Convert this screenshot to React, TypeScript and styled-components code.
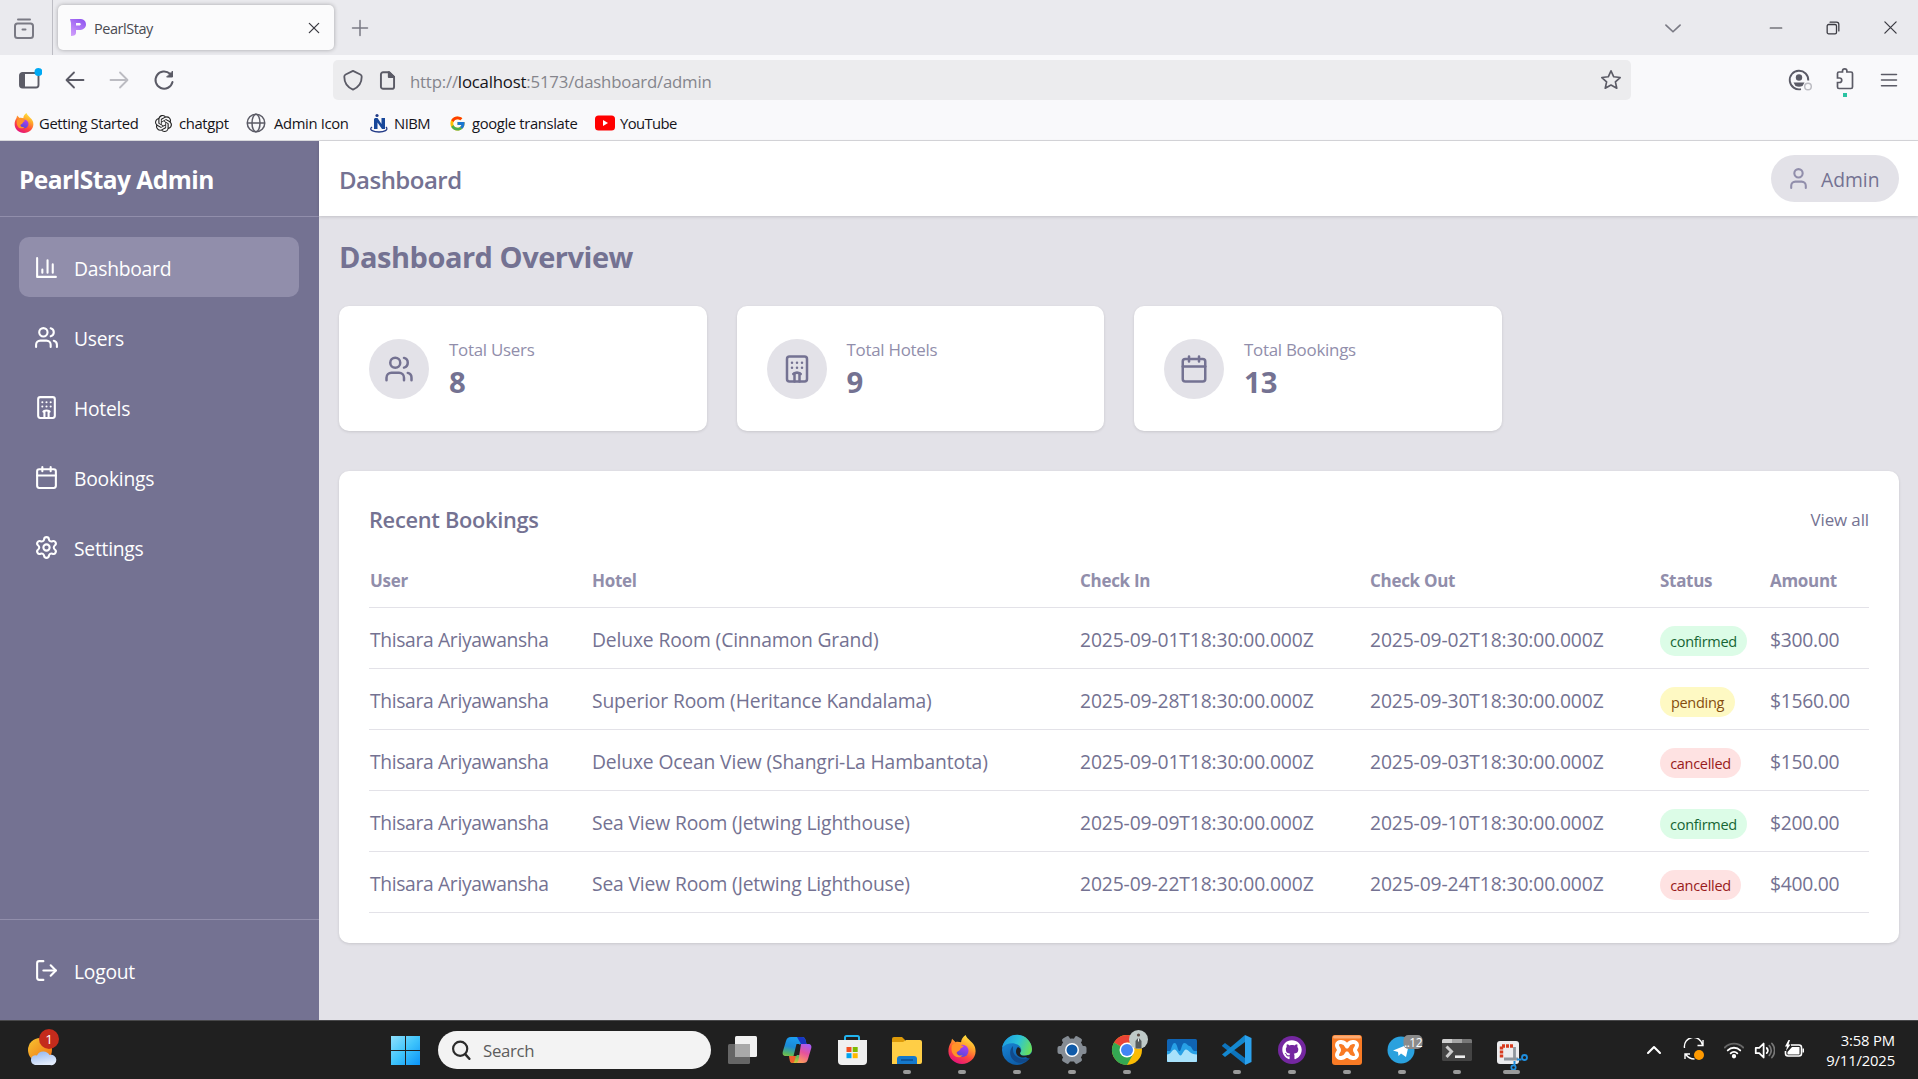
import React from "react";
import styled, { createGlobalStyle, css } from "styled-components";
import { Users, Hotel, Calendar, Settings, LogOut, User } from "lucide-react";
import { FcGoogle } from "react-icons/fc";
import { FaGithub } from "react-icons/fa";
import { SiOpenai } from "react-icons/si";

const c = {
  purple: "#747292",
  mid: "#918eab",
  pale: "#e3e2e8",
  chrome: "#eaeaee",
  toolbar: "#f9f9fb",
  ink: "#5b5b66",
};

const GlobalStyle = createGlobalStyle`
  * { box-sizing: border-box; }
  body { margin: 0; font-family: "Open Sans", "Noto Sans", sans-serif; overflow: hidden; }
  svg { display: block; flex: none; }
  h1, h2, p { margin: 0; }
`;

const Screen = styled.div`
  display: flex;
  flex-direction: column;
  width: 1918px;
  height: 1079px;
  background: ${c.pale};
`;

/* ---------- browser ---------- */
const TabBar = styled.div`
  display: flex;
  align-items: center;
  height: 55px;
  background: ${c.chrome};
  color: ${c.ink};
`;
const ArchiveCell = styled.div`
  width: 53px;
  height: 55px;
  padding: 17px 0 0 12px;
  border-right: 1px solid #bdbdc4;
`;
const Tab = styled.div`
  display: flex;
  align-items: center;
  width: 276px;
  height: 45px;
  margin: 0 16px 0 5px;
  padding: 0 13px 0 12px;
  border-radius: 5px;
  background: #fbfbfc;
  box-shadow: 0 0 4px rgba(0, 0, 0, 0.3);
`;
const TabTitle = styled.span`
  flex: 1;
  margin-left: 7px;
  padding-top: 2px;
  font-size: 14.5px;
  letter-spacing: -0.45px;
  color: #4a4a52;
`;
const WindowControls = styled.div`
  display: flex;
  align-items: center;
  margin-left: auto;
  padding-right: 20px;
  gap: 43px;
`;
const TabsMenu = styled.div`
  margin-right: 43px;
`;
const Toolbar = styled.div`
  display: flex;
  align-items: center;
  height: 50px;
  background: ${c.toolbar};
  color: ${c.ink};
`;
const NavButtons = styled.div`
  display: flex;
  align-items: center;
  width: 333px;
  padding-left: 18px;
  gap: 20.5px;
`;
const UrlBar = styled.div`
  display: flex;
  align-items: center;
  width: 1298px;
  height: 40px;
  padding: 0 9px 0 9px;
  border-radius: 5px;
  background: #ececee;
`;
const PageInfo = styled.div`
  margin-left: 13px;
`;
const Url = styled.span`
  flex: 1;
  margin-left: 12px;
  padding-top: 2px;
  font-size: 16.8px;
  letter-spacing: -0.2px;
  color: #85858c;
  b { font-weight: 400; color: #15141a; }
`;
const ToolbarEnd = styled.div`
  display: flex;
  align-items: center;
  margin-left: auto;
  padding-right: 20px;
  gap: 21px;
  svg:last-child { margin-left: 3px; }
`;
const Bookmarks = styled.div`
  display: flex;
  height: 36px;
  padding-left: 14px;
  align-items: center;
  background: ${c.toolbar};
  border-bottom: 1px solid #d8d8dc;
`;
const Bookmark = styled.div<{ $w: number; $gap?: number; $track?: number }>`
  display: flex;
  align-items: center;
  width: ${(p) => p.$w}px;
  gap: ${(p) => p.$gap ?? 5}px;
  padding-top: 1px;
  font-size: 14.8px;
  letter-spacing: ${(p) => p.$track ?? -0.35}px;
  white-space: nowrap;
  color: #15141a;
`;

/* ---------- admin page ---------- */
const Page = styled.div`
  display: flex;
  height: 879px;
`;
const Sidebar = styled.aside`
  display: flex;
  flex-direction: column;
  width: 319px;
  background: ${c.purple};
  color: #fff;
`;
const Brand = styled.div`
  height: 76px;
  padding: 20.5px 19px 0;
  border-bottom: 1px solid ${c.mid};
  font-size: 24.5px;
  line-height: 36px;
  font-weight: 700;
  letter-spacing: -0.52px;
`;
const Nav = styled.nav`
  display: flex;
  flex-direction: column;
  flex: 1;
  gap: 10px;
  padding: 20px 20px 0 19px;
`;
const NavItem = styled.a<{ $active?: boolean }>`
  display: flex;
  align-items: center;
  height: 60px;
  padding-left: 15px;
  gap: 15px;
  border-radius: 10px;
  font-size: 19.3px;
  letter-spacing: -0.25px;
  background: ${(p) => (p.$active ? c.mid : "transparent")};
  span { padding-top: 3px; }
`;
const SideFooter = styled.div`
  height: 101px;
  padding: 20px 20px 0 19px;
  border-top: 1px solid ${c.mid};
`;
const Main = styled.main`
  display: flex;
  flex-direction: column;
  flex: 1;
`;
const PageHeader = styled.header`
  display: flex;
  align-items: center;
  justify-content: space-between;
  height: 75px;
  padding: 0 19px 0 20px;
  background: #fff;
  box-shadow: 0 1px 3px rgba(0, 0, 0, 0.15);
`;
const PageTitle = styled.h2`
  padding-top: 1px;
  font-size: 24px;
  font-weight: 600;
  letter-spacing: -0.52px;
  color: ${c.purple};
`;
const Profile = styled.div`
  display: flex;
  align-items: center;
  width: 128px;
  height: 47px;
  padding-left: 15px;
  gap: 10px;
  border-radius: 24px;
  background: ${c.pale};
  font-size: 19.3px;
  color: ${c.purple};
  svg { color: ${c.mid}; }
  span { padding-top: 2px; }
`;
const Content = styled.div`
  padding: 21px 19px 0 20px;
`;
const Heading = styled.h1`
  margin-bottom: 29px;
  font-size: 29px;
  line-height: 40px;
  font-weight: 700;
  letter-spacing: -0.48px;
  color: ${c.purple};
`;
const Stats = styled.div`
  display: grid;
  grid-template-columns: repeat(4, 1fr);
  gap: 30px;
  margin-bottom: 40px;
`;
const card = css`
  border-radius: 10px;
  background: #fff;
  box-shadow: 0 1px 3px rgba(0, 0, 0, 0.12);
`;
const StatCard = styled.div`
  ${card}
  display: flex;
  align-items: center;
  height: 125px;
  padding-left: 30px;
  gap: 20px;
`;
const StatIcon = styled.div`
  display: grid;
  place-items: center;
  width: 60px;
  height: 60px;
  border-radius: 50%;
  background: ${c.pale};
  color: ${c.purple};
`;
const StatLabel = styled.p`
  padding-top: 1px;
  font-size: 16.9px;
  line-height: 25px;
  letter-spacing: -0.26px;
  color: ${c.mid};
`;
const StatValue = styled.p`
  font-size: 29.3px;
  line-height: 40px;
  font-weight: 700;
  color: ${c.purple};
`;
const Panel = styled.section`
  ${card}
  height: 472px;
  padding: 30px;
`;
const PanelHead = styled.div`
  display: flex;
  align-items: center;
  justify-content: space-between;
  height: 51px;
  padding-bottom: 14px;
  color: ${c.purple};
`;
const PanelTitle = styled.h2`
  font-size: 21.8px;
  font-weight: 600;
  letter-spacing: -0.3px;
`;
const ViewAll = styled.a`
  font-size: 16.9px;
  letter-spacing: -0.1px;
`;
const Row = styled.div<{ $head?: boolean }>`
  display: grid;
  grid-template-columns: 222px 488px 290px 290px 110px 1fr;
  align-items: center;
  height: ${(p) => (p.$head ? 56 : 61)}px;
  padding: ${(p) => (p.$head ? 1 : 3)}px 0 0 1px;
  border-bottom: 1px solid ${c.pale};
  white-space: nowrap;
  font-size: ${(p) => (p.$head ? 17 : 19.3)}px;
  font-weight: ${(p) => (p.$head ? 700 : 400)};
  letter-spacing: ${(p) => (p.$head ? -0.3 : -0.35)}px;
  color: ${(p) => (p.$head ? c.mid : c.purple)};
`;
const HotelCell = styled.span`
  letter-spacing: -0.15px;
`;
const DateCell = styled.span`
  letter-spacing: -0.13px;
`;
const AmountCell = styled.span`
  letter-spacing: -0.3px;
`;
type Status = "confirmed" | "pending" | "cancelled";
const tone: Record<Status, [string, string, number]> = {
  confirmed: ["#dcfce7", "#166534", 87],
  pending: ["#fef9c3", "#854d0e", 75],
  cancelled: ["#fee2e2", "#991b1b", 81],
};
const Badge = styled.span<{ $status: Status }>`
  display: block;
  width: ${(p) => tone[p.$status][2]}px;
  height: 30px;
  margin-top: 3px;
  padding-top: 1px;
  border-radius: 15px;
  font-size: 14.5px;
  line-height: 29px;
  letter-spacing: -0.3px;
  text-align: center;
  background: ${(p) => tone[p.$status][0]};
  color: ${(p) => tone[p.$status][1]};
`;

/* ---------- taskbar ---------- */
const Taskbar = styled.footer`
  display: flex;
  height: 59px;
  border-top: 1px solid #48484a;
  background: #202020;
  color: #fff;
`;
const Weather = styled.div`
  width: 391px;
  padding: 7px 0 0 26px;
`;
const Start = styled.div`
  width: 47px;
  padding-top: 15px;
`;
const SearchBox = styled.div`
  display: flex;
  align-items: center;
  width: 273px;
  height: 38px;
  margin-top: 10px;
  padding-left: 13px;
  gap: 12px;
  border-radius: 19px;
  background: #f3f3f3;
  font-size: 16.8px;
  letter-spacing: -0.3px;
  color: #5c5c5c;
`;
const Apps = styled.div`
  display: flex;
  padding-left: 3px;
`;
const AppSlot = styled.div<{ $run?: boolean; $wide?: boolean }>`
  display: flex;
  flex-direction: column;
  align-items: center;
  width: 55px;
  padding-top: 9px;
  &::after {
    content: "";
    width: ${(p) => (p.$wide ? 17 : 8)}px;
    height: 4px;
    border-radius: 2px;
    background: ${(p) => (p.$run ? "#9a9a9a" : "transparent")};
  }
`;
const Tray = styled.div`
  display: flex;
  align-items: center;
  margin-left: auto;
  padding-right: 23px;
`;
const TrayIcon = styled.div<{ $w: number }>`
  display: flex;
  justify-content: center;
  width: ${(p) => p.$w}px;
`;
const Clock = styled.div`
  width: 81px;
  text-align: right;
  font-size: 14.8px;
  line-height: 20px;
  letter-spacing: -0.15px;
  white-space: nowrap;
`;

/* ---------- icons ---------- */
type LineProps = { w?: number; sw?: number; children: React.ReactNode; color?: string };
const Line = ({ w = 24, sw = 1.8, children, color = "currentColor" }: LineProps) => (
  <svg width={w} height={w} viewBox="0 0 24 24" fill="none" stroke={color} strokeWidth={sw} strokeLinecap="round" strokeLinejoin="round">
    {children}
  </svg>
);

const BarChart = () => (
  <Line w={25} sw={2}>
    <path d="M3 3v18h18M18 17V9M13 17V5M8 17v-3" />
  </Line>
);

const Firefox = ({ w = 20, id }: { w?: number; id: string }) => (
  <svg width={w} height={w} viewBox="0 0 32 32">
    <defs>
      <linearGradient id={id + "a"} x1="0.8" y1="0" x2="0.3" y2="1">
        <stop offset="0" stopColor="#fff044" />
        <stop offset="0.35" stopColor="#ffa62b" />
        <stop offset="0.65" stopColor="#ff4a3c" />
        <stop offset="1" stopColor="#e3107f" />
      </linearGradient>
      <linearGradient id={id + "b"} x1="0.7" y1="0" x2="0.3" y2="1">
        <stop offset="0" stopColor="#b43cf0" />
        <stop offset="1" stopColor="#5148d8" />
      </linearGradient>
    </defs>
    <path fill={`url(#${id}a)`} d="M20 0c1 3 3 4 5.500 7C30 11 31 14 31 18c0 8-7 14-15 14S1 26 1 18c0-4 1-7 3-10l1-4 4 4c2-1 4 0 6 0 0-3 2-6 5-8Z" />
    <circle cx="16.500" cy="17.500" r="6.700" fill={`url(#${id}b)`} />
    <path fill="#ff9328" d="M5 11c3-2 6-2 8-1 1 1 3 2 5 2-1 2-4 2-4 4-1 2-4 2-4 4 1 3 5 3 7 2-3 4-9 3-11-1-2-3-2-7-1-10Z" />
  </svg>
);

const WeatherIcon = () => (
  <svg width="34" height="40" viewBox="0 0 34 40">
    <defs>
      <linearGradient id="sun" x1="0" y1="0" x2="1" y2="1"><stop stopColor="#f7c531" /><stop offset="1" stopColor="#f06c12" /></linearGradient>
      <linearGradient id="cl" x1="0" y1="0" x2="0.4" y2="1"><stop stopColor="#8db2ee" /><stop offset="1" stopColor="#e3ecfc" /></linearGradient>
    </defs>
    <circle cx="14" cy="22" r="12" fill="url(#sun)" />
    <path d="M9 37a5 5 0 0 1-1-9.500 5 5 0 0 1 3 0 7 7 0 0 1 12.500-.500A5.200 5.200 0 1 1 24 37Z" fill="url(#cl)" />
    <circle cx="23" cy="11" r="10" fill="#c42b1c" />
    <text x="23" y="16" textAnchor="middle" fontSize="13.5" fill="#fff">1</text>
  </svg>
);

const Ico = ({ children }: { children: React.ReactNode }) => (
  <svg width="46" height="40" viewBox="0 1 46 40">{children}</svg>
);

const TaskView = () => (
  <Ico>
    <rect x="16" y="7" width="22" height="21" rx="1.500" fill="#f1f1f1" />
    <rect x="9" y="15" width="22" height="20" rx="1.500" fill="#666" />
    <rect x="16" y="15" width="15" height="13" fill="#a9a9a9" />
  </Ico>
);
const Copilot = () => (
  <Ico>
    <defs>
      <linearGradient id="cpa" x1="0.3" y1="0" x2="0.1" y2="1"><stop stopColor="#1b9df0" /><stop offset="0.35" stopColor="#1c8ad6" /><stop offset="0.65" stopColor="#5cb85c" /><stop offset="1" stopColor="#f5d020" /></linearGradient>
      <linearGradient id="cpb" x1="0.7" y1="0" x2="0.3" y2="1"><stop stopColor="#a85cf5" /><stop offset="0.45" stopColor="#e6529c" /><stop offset="1" stopColor="#ffa05a" /></linearGradient>
    </defs>
    <path d="M17 8h11c2 0 3 1 3.500 3l1 4h-5c-2 0-3 1-4 4l-2 7h6l-2 5c-.500 2-1.500 3-3.500 3h-3c-2 0-3-2-3-4l-.500-3H12c-3 0-4-2-3-5l3-10c1-3 2-4 5-4Z" fill="url(#cpa)" />
    <path d="M23 8h5c2 0 3 1 3.500 3l1 4H27l-4-7Z" fill="#1836c4" />
    <path d="M27 15h7c3 0 4 2 3 5l-3 10c-1 3-2 4-5 4h-8c2 0 3-1 3.500-3L27 15Z" fill="url(#cpb)" />
    <path d="M15 27h7l-1.500 5c-.500 1.500-1 2-2 2-2 0-2.500-1-3-4Z" fill="#f1602d" />
    <path d="M22.500 15h3l-3 12h-3Z" fill="#202020" />
  </Ico>
);
const Store = () => (
  <Ico>
    <path d="M16 12V8.500C16 7.500 16.500 7 17.500 7h11c1 0 1.500.500 1.500 1.500V12" fill="none" stroke="#22b4ee" strokeWidth="2" />
    <path d="M9 11h29v21a4 4 0 0 1-4 4H13a4 4 0 0 1-4-4Z" fill="#f0f0f0" />
    <path d="M17.500 18h5v5h-5z" fill="#f25022" /><path d="M23.700 18h5v5h-5z" fill="#7fba00" />
    <path d="M17.500 24.200h5v5h-5z" fill="#00a4ef" /><path d="M23.700 24.200h5v5h-5z" fill="#ffb900" />
  </Ico>
);
const Explorer = () => (
  <Ico>
    <path d="M8 10a2 2 0 0 1 2-2h8l3 3v6H8Z" fill="#dd9a09" />
    <path d="M8 13h11l3-2h14a2 2 0 0 1 2 2v20a2 2 0 0 1-2 2H8Z" fill="#ffce46" />
    <path d="M13 35v-5c0-2 1-3 3-3h14c2 0 3 1 3 3v5Z" fill="#1579cc" />
    <path d="M17 31h12" stroke="#0b4e92" strokeWidth="1.500" />
  </Ico>
);
const Edge = () => (
  <Ico>
    <defs>
      <linearGradient id="eg" x1="0" y1="0.3" x2="1" y2="0.6"><stop stopColor="#1c9be0" /><stop offset="0.5" stopColor="#2cc3d8" /><stop offset="1" stopColor="#6be058" /></linearGradient>
      <linearGradient id="eb" x1="0" y1="0" x2="0.6" y2="1"><stop stopColor="#1b8fe0" /><stop offset="1" stopColor="#0c59a4" /></linearGradient>
    </defs>
    <path d="M8 21A15 15 0 0 1 38 21c0 4-3 6-8 6l5 3A15 15 0 0 1 8 21Z" fill="url(#eb)" />
    <path d="M19 17c-6 6-2 17 8 17 4-1 7-2 9-5-10 3-17-2-17-8Z" fill="#114a8b" />
    <path d="M8.200 18.500A15 15 0 0 1 38 20c0 4.500-3 6.500-7.500 6.500-3 0-5-1-4.500-2.500 2-2 1.500-5-.500-7-4-4-12.500-4-17.300 1.500Z" fill="url(#eg)" />
    <path d="M24 18c3.500 1.500 3 4.500 2 6 0 3 5 3.500 9 2-2 3.500-12 4-13-3 0-2 .500-4 2-5Z" fill="#202020" />
  </Ico>
);
const Gear = () => (
  <Ico>
    <g fill="#858c94">
      <circle cx="23" cy="21" r="11.500" />
      {[90, 30, 150].map((a) => (
        <rect key={a} x="19" y="6.500" width="8" height="29" rx="2" transform={`rotate(${a} 23 21)`} />
      ))}
    </g>
    <circle cx="23" cy="21" r="7" fill="#fff" />
    <circle cx="23" cy="21" r="5.500" fill="#0f5aa8" />
  </Ico>
);
const Chrome = () => (
  <Ico>
    <circle cx="23" cy="21" r="15" fill="#fbbc04" />
    <path d="M23 21 10 13.500A15 15 0 0 1 36 13.500H23Z" fill="#ea4335" />
    <path d="M10 13.500A15 15 0 0 0 23 36l6.500-11.500L23 21Z" fill="#34a853" />
    <circle cx="23" cy="21" r="7.500" fill="#fff" />
    <circle cx="23" cy="21" r="6" fill="#4285f4" />
    <circle cx="34.500" cy="10.500" r="9.500" fill="#bfcac8" />
    <path d="M31.500 19.500V12l2-2.500h2l2 2.500v7.500Z" fill="#565c5e" />
    <circle cx="34.500" cy="6" r="1.600" fill="#5a4a42" />
    <path d="M34 9.500h1v3h-1Z" fill="#eee" />
  </Ico>
);
const Monitor = () => (
  <Ico>
    <rect x="8" y="10" width="30" height="23" rx="1.500" fill="#0f64b4" />
    <path d="M8 22h3c1 0 2-8 4.500-8 3 0 3 8 5 8s2-8 5-8c2.500 0 3 3 5 3s3 5 5 5h2.500v11H8Z" fill="#27a0e6" />
    <path d="M8 25.500c4 0 5-5 7.500-5s4 6 6 6 3-6 5.500-6 4 5 11 5v6a1.500 1.500 0 0 1-1.500 1.500h-27A1.500 1.500 0 0 1 8 31.500Z" fill="#a9e2fb" />
  </Ico>
);
const VSCode = () => (
  <Ico>
    <path d="M8 16.500 11 14l20 15v6.500L8.500 17.500Z" fill="#0d74bd" />
    <path d="M8 25.500 31 6v7L11 28Z" fill="#1488d0" />
    <path d="M31 6l6.500 3v24L31 36Z" fill="#2ba2ee" />
  </Ico>
);
const GithubDesk = () => (
  <Ico>
    <circle cx="23" cy="21" r="14" fill="#7427a0" />
    <g transform="translate(13 11)"><FaGithub size={20} color="#fff" /></g>
  </Ico>
);
const Xampp = () => (
  <Ico>
    <rect x="8" y="6" width="30" height="30" rx="3" fill="#f97b25" />
    <rect x="9" y="6.500" width="28" height="3" rx="1.500" fill="#fbab74" />
    <path
      d="M23 17.500C25 12 33 11.500 33 16c0 2.500-2 3.500-2 5s2 2.500 2 5c0 4.500-8 4-10-1.500-2 5.500-10 6-10 1.500 0-2.500 2-3.500 2-5s-2-2.500-2-5c0-4.500 8-4 10 1.500Z"
      fill="none" stroke="#fff" strokeWidth="4" strokeLinejoin="round"
    />
  </Ico>
);
const Telegram = () => (
  <Ico>
    <circle cx="22" cy="21" r="13.500" fill="#2aa1de" />
    <path d="M14 21.500 30 15l-3 13-5-3.500-2.500 2.500-.500-4Z" fill="#fff" />
    <rect x="24.500" y="6" width="19" height="14" rx="5" fill="#8b8b8b" />
    <text x="34" y="17.500" textAnchor="middle" fontSize="12" fill="#fff" letterSpacing="-0.5">..12</text>
  </Ico>
);
const Terminal = () => (
  <Ico>
    <rect x="8" y="10" width="30" height="22" rx="1.500" fill="#444" />
    <path d="M8 14v-2.500A1.500 1.500 0 0 1 9.500 10H18v4Z" fill="#cfcfcf" />
    <path d="M18 10h10v4H18z" fill="#a5a5a5" /><path d="M28 10h8.500a1.500 1.500 0 0 1 1.500 1.500V14H28Z" fill="#777" />
    <path d="m12.500 17.500 5 5-5 5.500" fill="none" stroke="#ccc" strokeWidth="3" />
    <path d="M21 27.700h10" stroke="#eee" strokeWidth="2.600" />
  </Ico>
);
const Snip = () => (
  <Ico>
    <rect x="8" y="12" width="22" height="23" rx="3" fill="#ececee" />
    <path d="M12.500 28.500V17H25" fill="none" stroke="#d83b1e" strokeWidth="3.400" strokeDasharray="3 1" />
    <path d="M15 30h14M25.500 18v13" stroke="#8f969d" strokeWidth="2.800" />
    <path d="M28 30.500h4.500M25.500 32v5" stroke="#1f8fe0" strokeWidth="2" />
    <circle cx="35.500" cy="28.500" r="2.500" fill="none" stroke="#1f8fe0" strokeWidth="1.800" />
    <circle cx="24.500" cy="38.500" r="2.200" fill="none" stroke="#1f8fe0" strokeWidth="1.700" />
  </Ico>
);

const TabLogo = () => (
  <svg width="17" height="19" viewBox="0 0 17 19">
    <defs><linearGradient id="pl" x1="0.8" y1="0" x2="0.2" y2="1"><stop stopColor="#9055f0" /><stop offset="1" stopColor="#cf9dfb" /></linearGradient></defs>
    <path fillRule="evenodd" d="M0 1h9c5 0 7 2 7 5.500S13 12 9 12H6v3c0 2-2 3-5 3V5Zm6 4v2.500h3c2.500 0 2.500-2.500 0-2.500Z" fill="url(#pl)" />
  </svg>
);

const menu = [
  { label: "Dashboard", icon: <BarChart /> },
  { label: "Users", icon: <Users size={25} /> },
  { label: "Hotels", icon: <Hotel size={25} /> },
  { label: "Bookings", icon: <Calendar size={25} /> },
  { label: "Settings", icon: <Settings size={25} /> },
];
const stats = [
  { label: "Total Users", value: 8, icon: <Users size={30} /> },
  { label: "Total Hotels", value: 9, icon: <Hotel size={30} /> },
  { label: "Total Bookings", value: 13, icon: <Calendar size={30} /> },
];
const bookings: { hotel: string; from: string; to: string; status: Status; amount: string }[] = [
  { hotel: "Deluxe Room (Cinnamon Grand)", from: "2025-09-01", to: "2025-09-02", status: "confirmed", amount: "$300.00" },
  { hotel: "Superior Room (Heritance Kandalama)", from: "2025-09-28", to: "2025-09-30", status: "pending", amount: "$1560.00" },
  { hotel: "Deluxe Ocean View (Shangri-La Hambantota)", from: "2025-09-01", to: "2025-09-03", status: "cancelled", amount: "$150.00" },
  { hotel: "Sea View Room (Jetwing Lighthouse)", from: "2025-09-09", to: "2025-09-10", status: "confirmed", amount: "$200.00" },
  { hotel: "Sea View Room (Jetwing Lighthouse)", from: "2025-09-22", to: "2025-09-24", status: "cancelled", amount: "$400.00" },
];
const time = "T18:30:00.000Z";

const apps: { icon: React.ReactNode; run?: boolean; wide?: boolean }[] = [
  { icon: <TaskView /> },
  { icon: <Copilot /> },
  { icon: <Store /> },
  { icon: <Explorer />, run: true },
  { icon: <Ico><g transform="translate(8.5 6)"><Firefox w={29} id="ft" /></g></Ico>, run: true },
  { icon: <Edge />, run: true },
  { icon: <Gear />, run: true },
  { icon: <Chrome />, run: true },
  { icon: <Monitor /> },
  { icon: <VSCode />, run: true },
  { icon: <GithubDesk />, run: true },
  { icon: <Xampp />, run: true },
  { icon: <Telegram />, run: true },
  { icon: <Terminal />, run: true },
  { icon: <Snip />, run: true, wide: true },
];

const BrowserChrome = () => (
  <>
    <TabBar>
      <ArchiveCell>
        <Line color="#7a7a84" sw={2}><path d="M6 2.500h12" /><rect x="3" y="6.500" width="18" height="14.500" rx="2.500" /><path d="M10.500 12.500h3" /></Line>
      </ArchiveCell>
      <Tab>
        <TabLogo />
        <TabTitle>PearlStay</TabTitle>
        <Line w={14} sw={2.200} color="#3b3b42"><path d="M4 4l16 16M20 4 4 20" /></Line>
      </Tab>
      <Line w={20} color="#7a7a84"><path d="M12 3v18M3 12h18" /></Line>
      <WindowControls>
        <TabsMenu>
          <Line w={20} color="#7a7a84" sw={2}><path d="M3.500 8.500 12 16.500l8.500-8" /></Line>
        </TabsMenu>
        <Line w={14} color="#3b3b42"><path d="M2 12h20" /></Line>
        <Line w={14} color="#3b3b42" sw={2.200}><rect x="2" y="6" width="16" height="16" rx="2.500" /><path d="M7 2h11a4 4 0 0 1 4 4v11" /></Line>
        <Line w={15} color="#3b3b42" sw={2}><path d="M3 3l18 18M21 3 3 21" /></Line>
      </WindowControls>
    </TabBar>
    <Toolbar>
      <NavButtons>
        <svg width="24" height="24" viewBox="0 0 24 24">
          <path d="M2 7.500A2.500 2.500 0 0 1 4.500 5H18a2.500 2.500 0 0 1 2.500 2.500V17a2.500 2.500 0 0 1-2.500 2.500H4.500A2.500 2.500 0 0 1 2 17Z" fill="none" stroke={c.ink} strokeWidth="1.900" />
          <path d="M2 6h5v13H2z" fill={c.ink} />
          <circle cx="20.500" cy="4" r="4" fill="#00a9f4" />
        </svg>
        <Line><path d="M20.500 12H4M11 4.500 3.500 12l7.500 7.500" /></Line>
        <Line color="#bcbcc2"><path d="M3.500 12H20M13 4.500 20.500 12 13 19.500" /></Line>
        <Line sw={2}><path d="M20.500 14A8.600 8.600 0 1 1 18 5.800L20 8" /><path d="M20.500 3.500V9H15Z" fill="currentColor" strokeWidth="1" /></Line>
      </NavButtons>
      <UrlBar>
        <Line w={22} sw={2}><path d="M12 2 4 6c-1 .500-1.500 1-1.500 2.500C2.500 15 6 20 12 22.500c6-2.500 9.500-7.500 9.500-14C21.500 7 21 6.500 20 6Z" /></Line>
        <PageInfo>
          <Line w={21} sw={2.200}><path d="M14 2.500H7A2.500 2.500 0 0 0 4.500 5v14A2.500 2.500 0 0 0 7 21.500h10a2.500 2.500 0 0 0 2.500-2.500V8Z" /><path d="M13.500 2.500V8h6Z" fill="currentColor" /></Line>
        </PageInfo>
        <Url>http://<b>localhost</b>:5173/dashboard/admin</Url>
        <Line w={22}><path d="m12 2 3 6.500 7 .800-5.200 4.700 1.500 7L12 17.500 5.700 21l1.500-7L2 9.300l7-.800Z" /></Line>
      </UrlBar>
      <ToolbarEnd>
        <svg width="26" height="24" viewBox="0 0 26 24">
          <path d="M21.300 12.500A9.300 9.300 0 1 0 14 21.100" fill="none" stroke={c.ink} strokeWidth="1.900" />
          <circle cx="12" cy="9.500" r="3.200" fill={c.ink} />
          <path d="M6.500 14.500h11l-2 3.500c-2 1-5 1-7 0Z" fill={c.ink} />
          <circle cx="21" cy="18.500" r="3.300" fill="none" stroke="#bcbcc2" strokeWidth="1.500" />
        </svg>
        <svg width="22" height="38" viewBox="0 0 22 38">
          <path d="M3.500 14V12.500c0-1 .500-1.500 1.500-1.500h3.500V10a2.200 2.200 0 0 1 4.400 0v1H17c1 0 1.500.500 1.500 1.500V26c0 1-.500 1.500-1.500 1.500H5c-1 0-1.500-.500-1.500-1.500v-4.500h2a2.200 2.200 0 0 0 0-4.500h-2Z" fill="none" stroke={c.ink} strokeWidth="1.700" />
          <path d="M9 32h4v4H9z" fill="#2ac3a2" />
        </svg>
        <Line w={18} sw={2}><path d="M2 4.500h20M2 12h20M2 19.500h20" /></Line>
      </ToolbarEnd>
    </Toolbar>
    <Bookmarks>
      <Bookmark $w={141}><Firefox id="fb" />Getting Started</Bookmark>
      <Bookmark $w={91} $gap={7}><SiOpenai size={17} color="#222" />chatgpt</Bookmark>
      <Bookmark $w={123} $gap={8}>
        <Line w={20} color={c.ink}><circle cx="12" cy="12" r="10.500" /><ellipse cx="12" cy="12" rx="4.800" ry="10.500" /><path d="M2 12h20" /></Line>
        Admin Icon
      </Bookmark>
      <Bookmark $w={80} $gap={6} $track={-0.5}>
        <svg width="19" height="20" viewBox="0 0 19 20">
          <path d="M5 16V6l1-1h2.500l4 6V5H16v11h-3L8.500 9.500V16Z" fill="#17479a" />
          <path d="M3 14c-4 3 2 5 7 5s10-2 7-5" fill="none" stroke="#223a86" strokeWidth="1.300" />
          <circle cx="8" cy="2.500" r="1.600" fill="#223a86" />
        </svg>
        NIBM
      </Bookmark>
      <Bookmark $w={146} $gap={6}><FcGoogle size={17} />google translate</Bookmark>
      <Bookmark $w={90} $track={-0.6}>
        <svg width="20" height="16" viewBox="0 0 20 16"><rect width="20" height="15" y="0.500" rx="3.500" fill="#f00" /><path d="M8 5v6l5-3Z" fill="#fff" /></svg>
        YouTube
      </Bookmark>
    </Bookmarks>
  </>
);

const AdminPage = () => (
  <Page>
    <Sidebar>
      <Brand>PearlStay Admin</Brand>
      <Nav>
        {menu.map((m, i) => (
          <NavItem key={m.label} $active={i === 0}>{m.icon}<span>{m.label}</span></NavItem>
        ))}
      </Nav>
      <SideFooter>
        <NavItem><LogOut size={25} /><span>Logout</span></NavItem>
      </SideFooter>
    </Sidebar>
    <Main>
      <PageHeader>
        <PageTitle>Dashboard</PageTitle>
        <Profile><User size={25} /><span>Admin</span></Profile>
      </PageHeader>
      <Content>
        <Heading>Dashboard Overview</Heading>
        <Stats>
          {stats.map((s) => (
            <StatCard key={s.label}>
              <StatIcon>{s.icon}</StatIcon>
              <div>
                <StatLabel>{s.label}</StatLabel>
                <StatValue>{s.value}</StatValue>
              </div>
            </StatCard>
          ))}
        </Stats>
        <Panel>
          <PanelHead>
            <PanelTitle>Recent Bookings</PanelTitle>
            <ViewAll>View all</ViewAll>
          </PanelHead>
          <Row $head>
            {["User", "Hotel", "Check In", "Check Out", "Status", "Amount"].map((h) => <span key={h}>{h}</span>)}
          </Row>
          {bookings.map((b, i) => (
            <Row key={i}>
              <span>Thisara Ariyawansha</span>
              <HotelCell>{b.hotel}</HotelCell>
              <DateCell>{b.from + time}</DateCell>
              <DateCell>{b.to + time}</DateCell>
              <Badge $status={b.status}>{b.status}</Badge>
              <AmountCell>{b.amount}</AmountCell>
            </Row>
          ))}
        </Panel>
      </Content>
    </Main>
  </Page>
);

const WindowsTaskbar = () => (
  <Taskbar>
    <Weather><WeatherIcon /></Weather>
    <Start>
      <svg width="29" height="29" viewBox="0 0 29 29">
        <defs><linearGradient id="win" x1="0" y1="0" x2="1" y2="1"><stop stopColor="#8fe0fc" /><stop offset="0.5" stopColor="#3fc4fb" /><stop offset="1" stopColor="#0a93f8" /></linearGradient></defs>
        <path d="M0 0h14v14H0zM15 0h14v14H15zM0 15h14v14H0zM15 15h14v14H15z" fill="url(#win)" />
      </svg>
    </Start>
    <SearchBox>
      <Line w={20} sw={2.600} color="#2b2b2b"><circle cx="11" cy="10.500" r="8.500" /><path d="m17 17 5 5.500" strokeWidth="3" /></Line>
      Search
    </SearchBox>
    <Apps>
      {apps.map((a, i) => <AppSlot key={i} $run={a.run} $wide={a.wide}>{a.icon}</AppSlot>)}
    </Apps>
    <Tray>
      <TrayIcon $w={40}><Line w={18} sw={2.800}><path d="m4 16 8-8 8 8" /></Line></TrayIcon>
      <TrayIcon $w={40}>
        <svg width="22" height="24" viewBox="0 0 22 24" fill="none" stroke="#fff" strokeWidth="1.400">
          <path d="M1.500 10A9 9 0 0 1 19.500 7M20 2v5.500h-5.500M2 21v-5h5M2.500 16c2 3 5 5 9 5" />
          <circle cx="16" cy="17" r="5" fill="#ff9a00" stroke="none" />
        </svg>
      </TrayIcon>
      <TrayIcon $w={40}>
        <Line w={20} sw={2.200}><path d="M1 9a15.500 15.500 0 0 1 22 0" stroke="#666" /><path d="M4.500 12.500a10.500 10.500 0 0 1 15 0M8 16a5.600 5.600 0 0 1 8 0" /><circle cx="12" cy="19.500" r="1.500" fill="#fff" /></Line>
      </TrayIcon>
      <TrayIcon $w={20}>
        <Line w={21} sw={2}><path d="M2 9h4l5-5v16l-5-5H2Z" /><path d="M14.500 9a4.500 4.500 0 0 1 0 6" /><path d="M17.500 6.500a8 8 0 0 1 0 11M20.500 4a12 12 0 0 1 0 16" stroke="#777" /></Line>
      </TrayIcon>
      <TrayIcon $w={40}>
        <svg width="21" height="20" viewBox="0 0 21 20">
          <path d="M7 5h8a2.500 2.500 0 0 1 2.500 2.500v6A2.500 2.500 0 0 1 15 16H4a2.500 2.500 0 0 1-2.500-2.500V11" fill="none" stroke="#fff" strokeWidth="1.600" />
          <path d="M8 7h7.500v7.500H3.500V12Z" fill="#fff" /><path d="M18.500 8.500h1.500v4h-1.500z" fill="#fff" />
          <path d="M4.500 0 1 6.500h2L2 11l4.500-6.500H4.500L6 0Z" fill="#fff" />
        </svg>
      </TrayIcon>
      <Clock>3:58 PM<br />9/11/2025</Clock>
    </Tray>
  </Taskbar>
);

export default function App() {
  return (
    <Screen>
      <GlobalStyle />
      <BrowserChrome />
      <AdminPage />
      <WindowsTaskbar />
    </Screen>
  );
}
